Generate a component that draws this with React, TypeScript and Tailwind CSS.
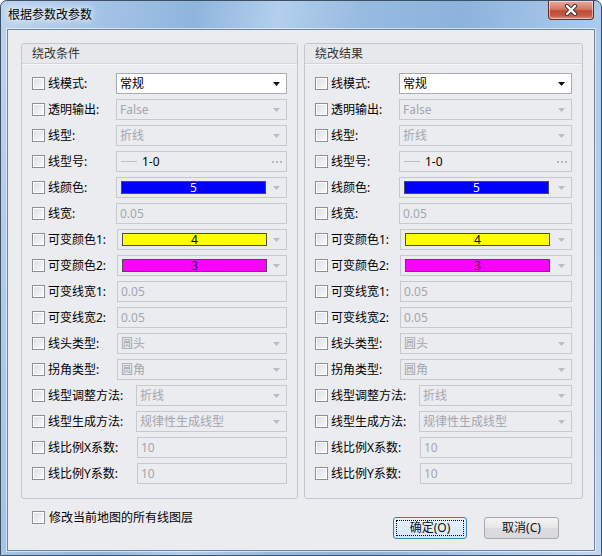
import React from "react";

type Kind = "combo" | "text" | "linetype" | "color";

type Row = {
  label: string;
  kind: Kind;
  value: string;
  enabled?: boolean;
  swatch?: string;
  swatchText?: string;
  labelW: string;
};

const rows: Row[] = [
  { label: "线模式:", kind: "combo", value: "常规", enabled: true, labelW: "w-[68px]" },
  { label: "透明输出:", kind: "combo", value: "False", labelW: "w-[68px]" },
  { label: "线型:", kind: "combo", value: "折线", labelW: "w-[68px]" },
  { label: "线型号:", kind: "linetype", value: "1-0", labelW: "w-[68px]" },
  { label: "线颜色:", kind: "color", value: "5", swatch: "bg-[#0000ff]", swatchText: "text-white", labelW: "w-[68px]" },
  { label: "线宽:", kind: "text", value: "0.05", labelW: "w-[68px]" },
  { label: "可变颜色1:", kind: "color", value: "4", swatch: "bg-[#ffff00]", swatchText: "text-black", labelW: "w-[69px]" },
  { label: "可变颜色2:", kind: "color", value: "3", swatch: "bg-[#ff00ff]", swatchText: "text-[#1c0830]", labelW: "w-[69px]" },
  { label: "可变线宽1:", kind: "text", value: "0.05", labelW: "w-[69px]" },
  { label: "可变线宽2:", kind: "text", value: "0.05", labelW: "w-[69px]" },
  { label: "线头类型:", kind: "combo", value: "圆头", labelW: "w-[69px]" },
  { label: "拐角类型:", kind: "combo", value: "圆角", labelW: "w-[69px]" },
  { label: "线型调整方法:", kind: "combo", value: "折线", labelW: "w-[88px]" },
  { label: "线型生成方法:", kind: "combo", value: "规律性生成线型", labelW: "w-[88px]" },
  { label: "线比例X系数:", kind: "text", value: "10", labelW: "w-[89px]" },
  { label: "线比例Y系数:", kind: "text", value: "10", labelW: "w-[89px]" },
];

function Arrow({ on }: { on?: boolean }) {
  return (
    <svg width="7" height="4" viewBox="0 0 7 4" className="ml-auto shrink-0">
      <path d="M0 0h7L3.5 4z" fill={on ? "#111" : "#b9bcc2"} />
    </svg>
  );
}

function CheckBox() {
  return (
    <div className="w-[13px] h-[13px] shrink-0 border border-[#8e9096] bg-white p-px">
      <div className="w-full h-full bg-[linear-gradient(135deg,#dfe1e5,#f7f7f8)]" />
    </div>
  );
}

function Field({ row }: { row: Row }) {
  if (row.kind === "combo") {
    const on = row.enabled;
    return (
      <div
        className={
          on
            ? "flex-1 h-[21px] flex items-center border border-[#a9acb2] bg-white pl-[3px] pr-[6px] text-black"
            : "flex-1 h-[21px] flex items-center border border-[#c7c9ce] pl-[3px] pr-[6px] text-[#a3a6ad]"
        }
      >
        <span>{row.value}</span>
        <Arrow on={on} />
      </div>
    );
  }
  if (row.kind === "text") {
    return (
      <div className="flex-1 h-[21px] flex items-center border border-[#c7c9ce] pl-[3px] text-[#a3a6ad]">
        {row.value}
      </div>
    );
  }
  if (row.kind === "linetype") {
    return (
      <div className="flex-1 h-[21px] flex items-center border border-[#c7c9ce] pl-[4px] pr-[4px]">
        <div className="w-[16px] h-px bg-[#bdbfc3]" />
        <span className="ml-[5px] text-black">{row.value}</span>
        <div className="ml-auto flex gap-[2px]">
          <div className="w-[2px] h-[2px] bg-[#b4b7bc]" />
          <div className="w-[2px] h-[2px] bg-[#b4b7bc]" />
          <div className="w-[2px] h-[2px] bg-[#b4b7bc]" />
        </div>
      </div>
    );
  }
  return (
    <div className="flex-1 h-[21px] flex items-center border border-[#c7c9ce] pl-[4px] pr-[6px]">
      <div
        className={`w-[145px] h-[13px] border border-[#4c4c4c] flex items-center justify-center leading-none ${row.swatch} ${row.swatchText}`}
      >
        {row.value}
      </div>
      <Arrow />
    </div>
  );
}

function GroupBox({ title, width }: { title: string; width: string }) {
  return (
    <div className={`${width} h-[456px] border border-[#c3c6cc] rounded-[3px] flex flex-col`}>
      <div className="h-[20px] shrink-0 flex items-center pl-[10px] bg-[#e6e8ec] border-b border-[#d3d5da] rounded-t-[3px] text-[#333]">
        {title}
      </div>
      <div className="flex flex-col gap-[5px] pt-[8px] pl-[10px] pr-[10px] border-t border-[#f6f7f9]">
        {rows.map((r) => (
          <div key={r.label} className="flex items-center h-[21px]">
            <CheckBox />
            <span className={`${r.labelW} shrink-0 ml-[3px] whitespace-nowrap text-black`}>{r.label}</span>
            <Field row={r} />
          </div>
        ))}
      </div>
    </div>
  );
}

export default function App() {
  return (
    <div className="w-[602px] h-[556px] relative flex flex-col border border-[#3e5066] rounded-t-[7px] overflow-hidden bg-[linear-gradient(100deg,#bcd4ee_0%,#a5c4e6_14%,#8fb5dd_28%,#b3cfec_40%,#97bbe0_52%,#8cb3dc_66%,#a6c6e9_82%,#c0d7ef_100%)] font-['Noto_Sans','Noto_Sans_CJK_SC',sans-serif] text-[12px] leading-[16px]">
      {/* title bar */}
      <div className="h-[28px] shrink-0 flex items-center pl-[7px] text-black [text-shadow:0_0_6px_#fff,0_0_10px_#fff]">
        根据参数改参数
      </div>
      <div className="absolute top-0 right-[7px] w-[46px] h-[19px] rounded-b-[4px] border border-t-0 border-[#6a2a1e] bg-[linear-gradient(180deg,#e9a99c_0%,#d47866_45%,#c04a33_55%,#c65a42_80%,#e08a72_100%)] flex items-center justify-center shadow-[0_0_0_1px_rgba(255,255,255,0.5)_inset]">
        <svg width="14" height="12" viewBox="0 0 14 12">
          <path d="M3 2L11 10M11 2L3 10" stroke="#3b3b3b" strokeWidth="4.4" strokeLinecap="round" />
          <path d="M3 2L11 10M11 2L3 10" stroke="#fff" strokeWidth="2.4" strokeLinecap="round" />
        </svg>
      </div>

      {/* client area */}
      <div className="mx-[6px] h-[522px] border border-[#72849a] bg-[#ebecf0] shadow-[0_0_0_1px_rgba(255,255,255,0.55)] flex flex-col">
        <div className="flex gap-[6px] pt-[13px] pl-[13px]">
          <GroupBox title="绕改条件" width="w-[277px]" />
          <GroupBox title="绕改结果" width="w-[279px]" />
        </div>
        <div className="flex justify-between">
          <div className="mt-[12px] ml-[24px] flex items-center h-[13px]">
            <CheckBox />
            <span className="ml-[4px] text-black">修改当前地图的所有线图层</span>
          </div>
          <div className="mt-[18px] mr-[35px] flex gap-[17px]">
            <button className="w-[74px] h-[22px] rounded-[3px] border border-[#3c7fb1] bg-[linear-gradient(180deg,#eaf3fc,#d4e5f7)] p-[2px]">
              <div className="w-full h-full border border-dotted border-black flex items-center justify-center text-[#111]">
                确定(O)
              </div>
            </button>
            <button className="w-[75px] h-[22px] rounded-[3px] border border-[#a7a9ad] bg-[linear-gradient(180deg,#f4f4f4,#e6e6e7_50%,#dcdcde_51%,#d8d9db)] flex items-center justify-center text-[#111]">
              取消(C)
            </button>
          </div>
        </div>
      </div>
    </div>
  );
}
